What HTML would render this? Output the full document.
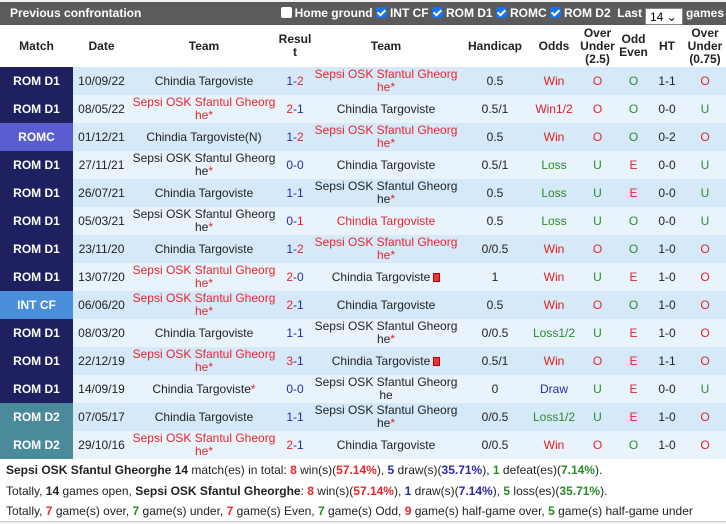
<!DOCTYPE html>
<html><head><meta charset="utf-8"><style>
*{margin:0;padding:0;box-sizing:border-box}
body{width:726px;height:524px;background:#f2f2f2;font-family:"Liberation Sans",Arial,sans-serif;font-size:12px;color:#222;overflow:hidden}
.bar{position:absolute;top:2px;left:0;width:726px;height:23px;background:#5b5b5b;color:#fff;font-weight:bold;font-size:12px}
.bar .t{position:absolute;left:10px;top:4px}
.bar .rt{position:absolute;right:2px;top:4px;white-space:nowrap;color:#fff}
.cb{display:inline-block;width:11px;height:11px;border-radius:2px;vertical-align:-1px;margin-right:3px;background:#fff}
.cb.on{background:#1a73e8;position:relative}
.cb.on:after{content:"";position:absolute;left:3px;top:1px;width:3px;height:6px;border:solid #fff;border-width:0 2px 2px 0;transform:rotate(45deg)}
.sel{display:inline-block;background:#fff;color:#000;font-weight:normal;width:38px;height:17px;margin:0 3px;padding-left:4px;vertical-align:-4px;line-height:17px;border:1px solid #888}
table{position:absolute;top:25px;left:0;width:726px;border-collapse:collapse;table-layout:fixed}
th{background:#fff;font-weight:bold;height:42px;font-size:12px;line-height:13px;text-align:center}
td{height:28px;text-align:center;line-height:13px;padding:0}
tr.a td{background:#d6e9f8}tr.b td{background:#e8f3fc}
td.m{color:#fff;font-weight:bold;font-size:12px}
.d1{background:#1e2060!important}.rc{background:#5a5dcf!important}.ic{background:#4a8fdc!important}.d2{background:#4b8a9b!important}
.r{color:#e8262a}.bl{color:#2a2aa8}.g{color:#2a8a2a}.dr{color:#e02020}
.sq{display:inline-block;width:7px;height:9px;background:#e33;border:1px solid #b00;vertical-align:-1px;margin-left:3px}
.sum{position:absolute;left:0;top:459px;width:726px;height:63px;background:#fff;border-bottom:1px solid #ccc}
.sum div{position:absolute;left:6px;white-space:nowrap;font-size:12px}
b{font-weight:bold}
</style></head><body>
<div class="bar"><span class="t">Previous confrontation</span>
<span class="rt"><span class="cb"></span>Home ground <span class="cb on"></span>INT CF <span class="cb on"></span>ROM D1 <span class="cb on"></span>ROMC <span class="cb on"></span>ROM D2 &nbsp;Last<span class="sel">14 ⌄</span>games</span></div>
<table>
<colgroup><col style="width:73px"><col style="width:57px"><col style="width:148px"><col style="width:34px"><col style="width:148px"><col style="width:70px"><col style="width:48px"><col style="width:39px"><col style="width:33px"><col style="width:34px"><col style="width:42px"></colgroup>
<tr><th>Match</th><th>Date</th><th>Team</th><th>Resul<br>t</th><th>Team</th><th>Handicap</th><th>Odds</th><th>Over<br>Under<br>(2.5)</th><th>Odd<br>Even</th><th>HT</th><th>Over<br>Under<br>(0.75)</th></tr>
<tr class="a"><td class="m d1">ROM D1</td><td>10/09/22</td><td>Chindia Targoviste</td><td><span class="bl">1</span><span class="bl">-</span><span class="r">2</span></td><td class="r">Sepsi OSK Sfantul Gheorg<br>he*</td><td>0.5</td><td class="dr">Win</td><td class="r">O</td><td class="g">O</td><td>1-1</td><td class="r">O</td></tr>
<tr class="b"><td class="m d1">ROM D1</td><td>08/05/22</td><td class="r">Sepsi OSK Sfantul Gheorg<br>he*</td><td><span class="r">2</span><span class="bl">-1</span></td><td>Chindia Targoviste</td><td>0.5/1</td><td class="dr">Win1/2</td><td class="r">O</td><td class="g">O</td><td>0-0</td><td class="g">U</td></tr>
<tr class="a"><td class="m rc">ROMC</td><td>01/12/21</td><td>Chindia Targoviste(N)</td><td><span class="bl">1-</span><span class="r">2</span></td><td class="r">Sepsi OSK Sfantul Gheorg<br>he*</td><td>0.5</td><td class="dr">Win</td><td class="r">O</td><td class="g">O</td><td>0-2</td><td class="r">O</td></tr>
<tr class="b"><td class="m d1">ROM D1</td><td>27/11/21</td><td>Sepsi OSK Sfantul Gheorg<br>he<span class="r">*</span></td><td class="bl">0-0</td><td>Chindia Targoviste</td><td>0.5/1</td><td class="g">Loss</td><td class="g">U</td><td class="r">E</td><td>0-0</td><td class="g">U</td></tr>
<tr class="a"><td class="m d1">ROM D1</td><td>26/07/21</td><td>Chindia Targoviste</td><td class="bl">1-1</td><td>Sepsi OSK Sfantul Gheorg<br>he<span class="r">*</span></td><td>0.5</td><td class="g">Loss</td><td class="g">U</td><td class="r">E</td><td>0-0</td><td class="g">U</td></tr>
<tr class="b"><td class="m d1">ROM D1</td><td>05/03/21</td><td>Sepsi OSK Sfantul Gheorg<br>he<span class="r">*</span></td><td><span class="bl">0-</span><span class="r">1</span></td><td class="r">Chindia Targoviste</td><td>0.5</td><td class="g">Loss</td><td class="g">U</td><td class="g">O</td><td>0-0</td><td class="g">U</td></tr>
<tr class="a"><td class="m d1">ROM D1</td><td>23/11/20</td><td>Chindia Targoviste</td><td><span class="bl">1-</span><span class="r">2</span></td><td class="r">Sepsi OSK Sfantul Gheorg<br>he*</td><td>0/0.5</td><td class="dr">Win</td><td class="r">O</td><td class="g">O</td><td>1-0</td><td class="r">O</td></tr>
<tr class="b"><td class="m d1">ROM D1</td><td>13/07/20</td><td class="r">Sepsi OSK Sfantul Gheorg<br>he*</td><td><span class="r">2</span><span class="bl">-0</span></td><td>Chindia Targoviste<span class="sq"></span></td><td>1</td><td class="dr">Win</td><td class="g">U</td><td class="r">E</td><td>1-0</td><td class="r">O</td></tr>
<tr class="a"><td class="m ic">INT CF</td><td>06/06/20</td><td class="r">Sepsi OSK Sfantul Gheorg<br>he*</td><td><span class="r">2</span><span class="bl">-1</span></td><td>Chindia Targoviste</td><td>0.5</td><td class="dr">Win</td><td class="r">O</td><td class="g">O</td><td>1-0</td><td class="r">O</td></tr>
<tr class="b"><td class="m d1">ROM D1</td><td>08/03/20</td><td>Chindia Targoviste</td><td class="bl">1-1</td><td>Sepsi OSK Sfantul Gheorg<br>he<span class="r">*</span></td><td>0/0.5</td><td class="g">Loss1/2</td><td class="g">U</td><td class="r">E</td><td>1-0</td><td class="r">O</td></tr>
<tr class="a"><td class="m d1">ROM D1</td><td>22/12/19</td><td class="r">Sepsi OSK Sfantul Gheorg<br>he*</td><td><span class="r">3</span><span class="bl">-1</span></td><td>Chindia Targoviste<span class="sq"></span></td><td>0.5/1</td><td class="dr">Win</td><td class="r">O</td><td class="r">E</td><td>1-1</td><td class="r">O</td></tr>
<tr class="b"><td class="m d1">ROM D1</td><td>14/09/19</td><td>Chindia Targoviste<span class="r">*</span></td><td class="bl">0-0</td><td>Sepsi OSK Sfantul Gheorg<br>he</td><td>0</td><td class="bl">Draw</td><td class="g">U</td><td class="r">E</td><td>0-0</td><td class="g">U</td></tr>
<tr class="a"><td class="m d2">ROM D2</td><td>07/05/17</td><td>Chindia Targoviste</td><td class="bl">1-1</td><td>Sepsi OSK Sfantul Gheorg<br>he<span class="r">*</span></td><td>0/0.5</td><td class="g">Loss1/2</td><td class="g">U</td><td class="r">E</td><td>1-0</td><td class="r">O</td></tr>
<tr class="b"><td class="m d2">ROM D2</td><td>29/10/16</td><td class="r">Sepsi OSK Sfantul Gheorg<br>he*</td><td><span class="r">2</span><span class="bl">-1</span></td><td>Chindia Targoviste</td><td>0/0.5</td><td class="dr">Win</td><td class="r">O</td><td class="g">O</td><td>1-0</td><td class="r">O</td></tr>
</table>
<div class="sum">
<div style="top:4px"><b>Sepsi OSK Sfantul Gheorghe</b> <b>14</b> match(es) in total: <b class="r">8</b> win(s)(<b class="r">57.14%</b>), <b class="bl">5</b> draw(s)(<b class="bl">35.71%</b>), <b class="g">1</b> defeat(es)(<b class="g">7.14%</b>).</div>
<div style="top:25px">Totally, <b>14</b> games open, <b>Sepsi OSK Sfantul Gheorghe</b>: <b class="r">8</b> win(s)(<b class="r">57.14%</b>), <b class="bl">1</b> draw(s)(<b class="bl">7.14%</b>), <b class="g">5</b> loss(es)(<b class="g">35.71%</b>).</div>
<div style="top:45px">Totally, <b class="r">7</b> game(s) over, <b class="g">7</b> game(s) under, <b class="r">7</b> game(s) Even, <b class="g">7</b> game(s) Odd, <b class="r">9</b> game(s) half-game over, <b class="g">5</b> game(s) half-game under</div>
</div>
</body></html>
